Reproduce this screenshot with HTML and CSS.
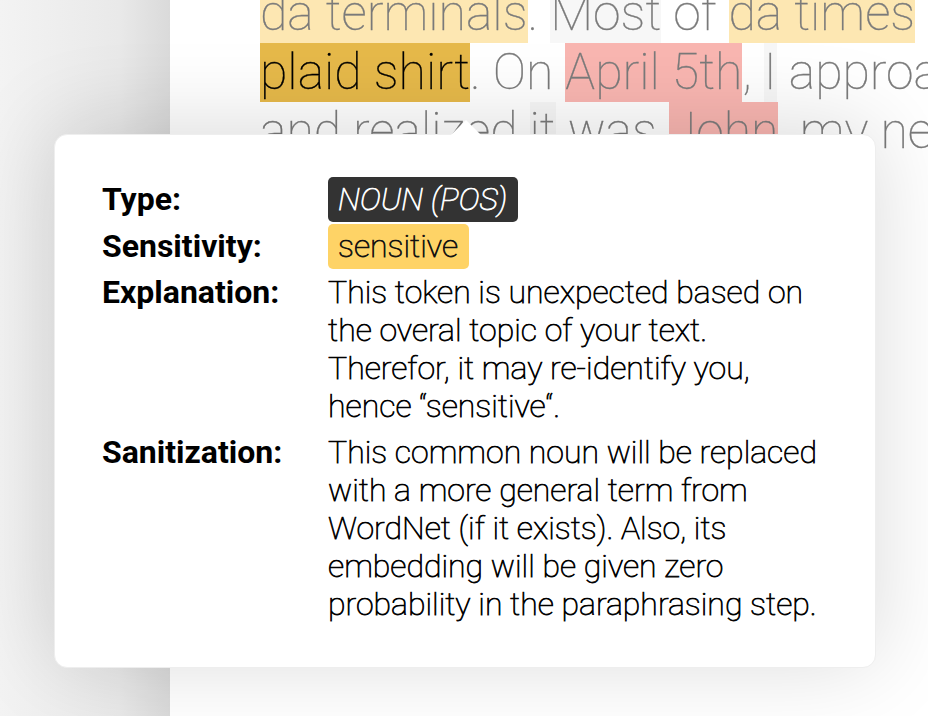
FILE: index.html
```html
<!DOCTYPE html>
<html>
<head>
<meta charset="utf-8">
<link rel="stylesheet" href="styles.css">
</head>
<body>
<div class="screen">
  <aside class="gutter"></aside>
  <main class="page">
    <div class="doc">
      <div class="line"><span class="tok hl-light">da terminals</span><span class="tok">. </span><span class="tok faint">Most</span><span class="tok"> of </span><span class="tok hl-light">da times</span><span class="tok"> I saw him</span></div>
      <div class="line"><span class="tok hl-gold">plaid shirt</span><span class="tok">. On </span><span class="tok hl-pink">April 5th</span><span class="tok">, </span><span class="tok faint">I</span><span class="tok"> approached him</span></div>
      <div class="line"><span class="tok">and realized </span><span class="tok faint">it</span><span class="tok"> was </span><span class="tok hl-pink">John</span><span class="tok">, my neighbour</span></div>
    </div>
  </main>
  <div class="tooltip">
    <div class="tip-grid">
      <div class="label">Type:</div>
      <div class="value"><span class="badge badge-dark">NOUN (POS)</span></div>
      <div class="label">Sensitivity:</div>
      <div class="value"><span class="badge badge-yellow">sensitive</span></div>
      <div class="label row-expl">Explanation:</div>
      <div class="value text row-expl">This token is unexpected based on the overal topic of your text. Therefor, it may re-identify you, hence “sensitive“.</div>
      <div class="label row-san">Sanitization:</div>
      <div class="value text row-san">This common noun will be replaced with a more general term from WordNet (if it exists). Also, its embedding will be given zero probability in the paraphrasing step.</div>
    </div>
  </div>
</div>
</body>
</html>
```

FILE: styles.css
```css
html, body {
  margin: 0;
  padding: 0;
}
body {
  width: 928px;
  height: 716px;
  overflow: hidden;
  font-family: Roboto, "Liberation Sans", sans-serif;
}
.screen {
  position: relative;
  display: flex;
  width: 928px;
  height: 716px;
  overflow: hidden;
}
.gutter {
  width: 170px;
  flex: none;
  background: linear-gradient(to right, #f3f3f3 0%, #e9e9e9 70%, #dadada 100%);
}
.page {
  flex: 1;
  background: #ffffff;
  padding-left: 90px;
  overflow: hidden;
}
.doc {
  margin-top: -16px;
  font-family: "Roboto Thin", Roboto, sans-serif;
  font-weight: 100;
  font-size: 50px;
  line-height: 59px;
  color: #7a7a7a;
  white-space: nowrap;
  -webkit-text-stroke: 0.3px currentColor;
}
.line {
  height: 59px;
}
.tok {
  display: inline-block;
  height: 59px;
  vertical-align: top;
  white-space: pre;
}
.hl-light { background: #fde7b2; }
.hl-gold { background: #e6b94a; color: #000; }
.hl-pink { background: #f9b6b1; }
.faint { background: #f7f7f7; }

.tooltip {
  position: absolute;
  left: 54px;
  top: 134px;
  width: 822px;
  box-sizing: border-box;
  background: #fff;
  border-radius: 13px;
  border: 1px solid #eeeeee;
  box-shadow: 0 -6px 90px rgba(0, 0, 0, 0.15);
  padding: 42px 52px 44px 47px;
}
.tooltip::before {
  content: "";
  position: absolute;
  left: 395px;
  top: -15px;
  width: 0;
  height: 0;
  border-left: 16px solid transparent;
  border-right: 16px solid transparent;
  border-bottom: 16px solid #fff;
}
.tip-grid {
  display: grid;
  grid-template-columns: 226px 1fr;
  align-items: baseline;
  font-size: 32px;
  line-height: 38px;
  color: #000;
}
.label {
  font-family: Roboto, sans-serif;
  font-weight: 700;
  font-size: 32px;
  color: #000;
}
.value {
  font-family: "Roboto Thin", Roboto, sans-serif;
  font-weight: 100;
  -webkit-text-stroke: 0.75px currentColor;
}
.badge {
  display: inline-block;
  padding: 3px 11px 3px 10px;
  line-height: 39px;
  border-radius: 5px;
  margin-bottom: 2px;
}
.badge-dark {
  background: #333333;
  color: #fff;
  font-style: italic;
}
.badge-yellow {
  background: #fed366;
  color: #111;
}
.row-expl {
  margin-top: 2px;
}
.row-san {
  margin-top: 8px;
}
```
